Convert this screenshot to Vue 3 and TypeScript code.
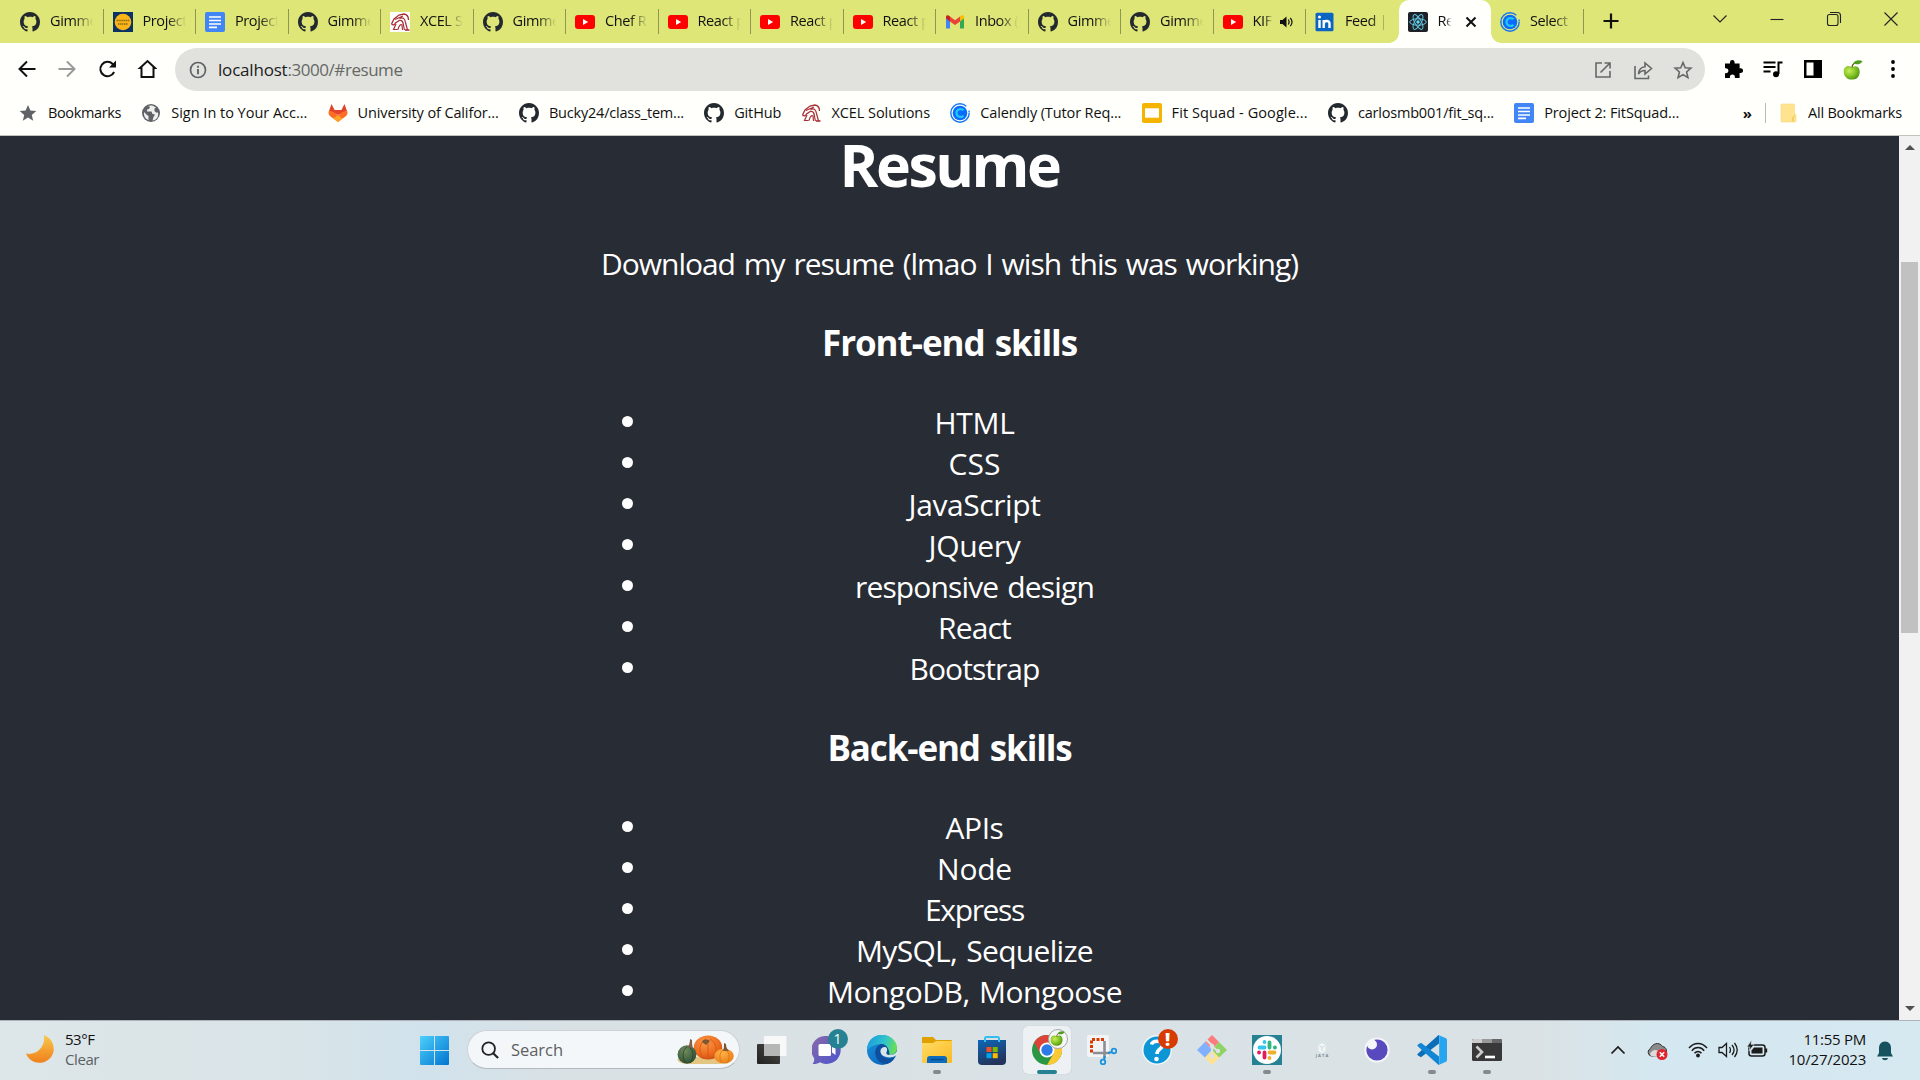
<script setup lang="ts">
interface Tab { icon: string; title: string; audio?: boolean; active?: boolean }
interface Bookmark { icon: string; label: string; width: number }
interface Skill { label: string; width: number }
interface TaskItem { icon: string; running?: boolean; active?: boolean; badge?: string; alert?: boolean }

/* Tunes letter spacing so that a label takes exactly the given width. */
const vFit = {
  mounted(el: HTMLElement, binding: { value: number }) {
    const count = (el.textContent ?? '').trim().length
    const natural = el.getBoundingClientRect().width
    if (count > 0) el.style.letterSpacing = `${((binding.value - natural) / count).toFixed(4)}px`
  },
}

const tabs: Tab[] = [
  { icon: 'github', title: 'Gimme' },
  { icon: 'climate', title: 'Project' },
  { icon: 'docs', title: 'Project' },
  { icon: 'github', title: 'Gimme' },
  { icon: 'xcelbox', title: 'XCEL S' },
  { icon: 'github', title: 'Gimme' },
  { icon: 'youtube', title: 'Chef R' },
  { icon: 'youtube', title: 'React p' },
  { icon: 'youtube', title: 'React p' },
  { icon: 'youtube', title: 'React p' },
  { icon: 'gmail', title: 'Inbox (' },
  { icon: 'github', title: 'Gimme' },
  { icon: 'github', title: 'Gimme' },
  { icon: 'youtube', title: 'KIF', audio: true },
  { icon: 'linkedin', title: 'Feed |' },
  { icon: 'react', title: 'Re', active: true },
  { icon: 'calendly', title: 'Select' },
]

const bookmarks: Bookmark[] = [
  { icon: 'star', label: 'Bookmarks', width: 73 },
  { icon: 'globe', label: 'Sign In to Your Acc...', width: 136 },
  { icon: 'gitlab', label: 'University of Califor...', width: 141 },
  { icon: 'github', label: 'Bucky24/class_tem...', width: 135 },
  { icon: 'github', label: 'GitHub', width: 47 },
  { icon: 'xcel', label: 'XCEL Solutions', width: 98.5 },
  { icon: 'calendly', label: 'Calendly (Tutor Req...', width: 141 },
  { icon: 'slides', label: 'Fit Squad - Google...', width: 136 },
  { icon: 'github', label: 'carlosmb001/fit_sq...', width: 136 },
  { icon: 'docs', label: 'Project 2: FitSquad...', width: 135 },
]

const frontEnd: Skill[] = [
  { label: 'HTML', width: 80 },
  { label: 'CSS', width: 52 },
  { label: 'JavaScript', width: 132 },
  { label: 'JQuery', width: 92 },
  { label: 'responsive design', width: 239 },
  { label: 'React', width: 73 },
  { label: 'Bootstrap', width: 130 },
]
const backEnd: Skill[] = [
  { label: 'APIs', width: 58 },
  { label: 'Node', width: 75 },
  { label: 'Express', width: 99 },
  { label: 'MySQL, Sequelize', width: 237 },
  { label: 'MongoDB, Mongoose', width: 295 },
]

const taskItems: TaskItem[] = [
  { icon: 'taskview' },
  { icon: 'chat', badge: '1' },
  { icon: 'edge' },
  { icon: 'explorer', running: true },
  { icon: 'store' },
  { icon: 'chrome', active: true },
  { icon: 'snip' },
  { icon: 'help', alert: true },
  { icon: 'git' },
  { icon: 'slack', running: true },
  { icon: 'jata' },
  { icon: 'insomnia' },
  { icon: 'vscode', running: true },
  { icon: 'terminal', running: true },
]
</script>

<template>
  <div class="screen">
    <svg class="sprite" width="0" height="0" aria-hidden="true">
      <defs>
        <linearGradient id="gWin" x1="0" y1="0" x2="1" y2="1"><stop offset="0" stop-color="#4cd0fb" /><stop offset="1" stop-color="#0274d0" /></linearGradient>
        <linearGradient id="gMoon" x1="0" y1="0" x2="0" y2="1"><stop offset="0" stop-color="#f8c84a" /><stop offset="1" stop-color="#f0801c" /></linearGradient>
        <linearGradient id="gChat" x1="0" y1="0" x2="1" y2="1"><stop offset="0" stop-color="#8b6aa8" /><stop offset="1" stop-color="#4b54cc" /></linearGradient>
        <linearGradient id="gEdgeTop" x1="0" y1="0.3" x2="1" y2="0.5"><stop offset="0" stop-color="#1b9de0" /><stop offset="0.6" stop-color="#32c6c8" /><stop offset="1" stop-color="#6be04e" /></linearGradient>
        <linearGradient id="gEdgeLow" x1="0" y1="0" x2="0.8" y2="1"><stop offset="0" stop-color="#1b94e0" /><stop offset="1" stop-color="#0b62b8" /></linearGradient>
        <linearGradient id="gFolder" x1="0" y1="0" x2="1" y2="1"><stop offset="0" stop-color="#ffdc68" /><stop offset="1" stop-color="#fbba20" /></linearGradient>
        <linearGradient id="gStore" x1="0" y1="0" x2="0.4" y2="1"><stop offset="0" stop-color="#0e68b8" /><stop offset="1" stop-color="#23345c" /></linearGradient>
        <linearGradient id="gDark" x1="0" y1="1" x2="1" y2="0"><stop offset="0" stop-color="#222" /><stop offset="1" stop-color="#4a4a48" /></linearGradient>
        <radialGradient id="gPump" cx="0.4" cy="0.3" r="0.8"><stop offset="0" stop-color="#f99a48" /><stop offset="0.6" stop-color="#ee6c1e" /><stop offset="1" stop-color="#c64a10" /></radialGradient>
        <radialGradient id="gPumpG" cx="0.4" cy="0.3" r="0.8"><stop offset="0" stop-color="#6f8c5c" /><stop offset="1" stop-color="#274830" /></radialGradient>
        <radialGradient id="gPumpS" cx="0.4" cy="0.3" r="0.8"><stop offset="0" stop-color="#ffb347" /><stop offset="1" stop-color="#e87812" /></radialGradient>
        <radialGradient id="gApple" cx="0.35" cy="0.35" r="0.75"><stop offset="0" stop-color="#c8ec5c" /><stop offset="0.5" stop-color="#86c828" /><stop offset="1" stop-color="#4c8c10" /></radialGradient>
      </defs>

      <symbol id="i-github" viewBox="0 0 16 16"><path fill="#24292f" d="M8 0C3.58 0 0 3.58 0 8c0 3.54 2.29 6.53 5.47 7.59.4.07.55-.17.55-.38 0-.19-.01-.82-.01-1.49-2.01.37-2.53-.49-2.69-.94-.09-.23-.48-.94-.82-1.13-.28-.15-.68-.52-.01-.53.63-.01 1.08.58 1.23.82.72 1.21 1.87.87 2.33.66.07-.52.28-.87.51-1.07-1.78-.2-3.64-.89-3.64-3.95 0-.87.31-1.59.82-2.15-.08-.2-.36-1.02.08-2.12 0 0 .67-.21 2.2.82.64-.18 1.32-.27 2-.27s1.36.09 2 .27c1.53-1.04 2.2-.82 2.2-.82.44 1.1.16 1.92.08 2.12.51.56.82 1.27.82 2.15 0 3.07-1.87 3.75-3.65 3.95.29.25.54.73.54 1.48 0 1.07-.01 1.93-.01 2.2 0 .21.15.46.55.38A8.01 8.01 0 0 0 16 8c0-4.42-3.58-8-8-8z" /></symbol>
      <symbol id="i-climate" viewBox="0 0 20 20"><rect width="20" height="20" fill="#0c3264" /><circle cx="10" cy="10" r="8.300" fill="#fdb515" /><path d="M3.500 8.500h13M5 12h10" stroke="#8a6a1c" stroke-width="1.500" stroke-dasharray="1.400 .5" /></symbol>
      <symbol id="i-docs" viewBox="0 0 20 20"><rect width="20" height="20" rx="2" fill="#4285f4" /><path d="M4 5h12M4 8.500h12M4 12h12M4 15.300h8" stroke="#fff" stroke-width="1.700" /></symbol>
      <symbol id="i-slides" viewBox="0 0 20 20"><rect width="20" height="20" rx="2" fill="#f4b400" /><rect x="3" y="5.300" width="14" height="9.400" fill="#fff" /></symbol>
      <symbol id="i-xcel" viewBox="0 0 20 20"><g fill="none" stroke="#a83038"><path d="M1.500 12L4 7l5-4 5-1c3 .5 4.500 3 4.500 6" stroke-width="1.300" /><path d="M1.500 12c1.500 1.500 3 1 4-1l4.500-3" stroke-width="1.300" /><path d="M5 7.500L13 4M9.500 6.500c4-2 5.500 1 6 4l2 7.500" stroke-width="1.200" /><path d="M10 8.500c4-.5 3 5 4.500 9.500M6 12l-2.500 5.500h4M8 17.500c1-4 2.500-5.500 4-4.500l.5 5" stroke-width="1.200" /><path d="M15 18h4.500" stroke-width="1.600" /></g></symbol>
      <symbol id="i-xcelbox" viewBox="0 0 20 20"><rect width="20" height="20" fill="#fff" /><use href="#i-xcel" width="20" height="20" /></symbol>
      <symbol id="i-youtube" viewBox="0 0 20 20"><rect y="3" width="20" height="14" rx="3" fill="#f00" /><path d="M8 7l5.200 3L8 13z" fill="#fff" /></symbol>
      <symbol id="i-gmail" viewBox="0 0 20 20"><path d="M1 5v11.500h4V8.500z" fill="#4285f4" /><path d="M15 8.500v8h4V5z" fill="#34a853" /><path d="M5 4.500v5L10 13l5-3.500v-5L10 8.200z" fill="#ea4335" /><path d="M1 5c0-2 2-2.500 4-.5v5L1 6.500z" fill="#c5221f" /><path d="M19 5c0-2-2-2.500-4-.5v5l4-3z" fill="#fbbc04" /></symbol>
      <symbol id="i-linkedin" viewBox="0 0 20 20"><rect x=".5" y=".8" width="18" height="18.400" rx="1.500" fill="#0a66c2" /><path d="M4.500 8v8M8.700 16V8M8.700 12c0-4 5.800-4 5.800-.5V16" fill="none" stroke="#fff" stroke-width="2.400" /><circle cx="4.500" cy="5" r="1.500" fill="#fff" /></symbol>
      <symbol id="i-react" viewBox="0 0 20 20"><rect width="20" height="20" rx="2" fill="#1e2127" /><g fill="none" stroke="#61c5e0" stroke-width="1"><ellipse cx="10" cy="10" rx="8.300" ry="3.200" /><ellipse cx="10" cy="10" rx="8.300" ry="3.200" transform="rotate(60 10 10)" /><ellipse cx="10" cy="10" rx="8.300" ry="3.200" transform="rotate(120 10 10)" /></g><circle cx="10" cy="10" r="1.700" fill="#61dafb" /></symbol>
      <symbol id="i-calendly" viewBox="0 0 20 20"><circle cx="10" cy="10" r="9.200" fill="none" stroke="#1777f2" stroke-width="1.400" stroke-dasharray="50 5 2 .8" /><circle cx="10" cy="10" r="7.300" fill="#0a6bff" /><path d="M13.500 7.300c-2-2.300-7-1.300-7 2.700s5 5 7 2.700" fill="none" stroke="#20c8f0" stroke-width="2.200" /></symbol>
      <symbol id="i-star" viewBox="0 0 20 20"><path fill="#5f6368" d="M10 2l2.400 5.500 5.900.5-4.500 3.900 1.400 5.900L10 14.600l-5.200 3.200 1.400-5.900L1.700 8l5.900-.5z" /></symbol>
      <symbol id="i-globe" viewBox="0 0 20 20"><circle cx="10" cy="10" r="9" fill="#5f6368" /><path d="M3 9l3 3 1.500 1v4c-3-1-5-4-4.500-8zM7 3l2 .8-1 2.200-2 .5v2h4.500l1 2.500 2.500.5L12.500 14l-1 3.500c4 0 6.500-4 5.500-8h-2l-1.500-1.500V5.500l1.500-1C12 2 9 2 7 3z" fill="#fffffb" opacity=".9" /></symbol>
      <symbol id="i-gitlab" viewBox="0 0 20 20"><path fill="#e24329" d="M3.500 1L1 8l9 4 9-4-2.500-7L13.400 7H6.600z" /><path fill="#fc6d26" d="M1 7.500C0 10 .5 12 2.500 13.500L10 19l7.500-5.500c2-1.500 2.500-3.500 1.500-6L14.500 9 10 12.500 5.500 9z" /><path fill="#fca326" d="M5.500 15.600L10 12.300l4.500 3.300L10 19z" /></symbol>
      <symbol id="i-folder" viewBox="0 0 20 20"><path d="M4 1h10.500a1 1 0 0 1 1 1v9l1.500.5V18a1 1 0 0 1-1 1H3a1 1 0 0 1-1-1V2a1 1 0 0 1 1-1z" fill="#ffe391" stroke="#f6d878" stroke-width=".6" /><path d="M14 18.500v-4l1.500-2" fill="none" stroke="#e8bb40" /></symbol>
      <symbol id="i-apple" viewBox="0 0 20 20"><path d="M9 7C4 4.500.5 7.500.7 12S4.500 20 9 19.500c5 .5 7.500-3.500 7.700-7.500S14 4.500 9 7z" fill="url(#gApple)" /><path d="M9 7.500c0-2 .7-3 2-4" fill="none" stroke="#5b3b16" stroke-width="1.100" /><path d="M10 3.500C12 0 16.500-.5 19.500 1.200c-1.500 3-5.500 4-9.500 2.300z" fill="#4f9c1c" /></symbol>

      <symbol id="i-windows" viewBox="0 0 29 29"><path fill="url(#gWin)" d="M1 0h13v14H0V1a1 1 0 0 1 1-1zM15 0h13a1 1 0 0 1 1 1v13H15zM0 15h14v14H1a1 1 0 0 1-1-1zM15 15h14v13a1 1 0 0 1-1 1H15z" /></symbol>
      <symbol id="i-moon" viewBox="0 0 28 28"><path fill="url(#gMoon)" d="M18 0C27 4 30 13 26 20.500 21 30 5 31 0 18.500 9 21 20 13 18 0z" /></symbol>
      <symbol id="i-taskview" viewBox="0 0 30 30"><rect y="9" width="23" height="20" rx="1" fill="url(#gDark)" /><rect x="7" y="1" width="22.500" height="20" rx="1" fill="#f8f8f8" /><rect x="7" y="9" width="16" height="12" fill="#b5b6b6" /></symbol>
      <symbol id="i-chat" viewBox="0 0 30 30"><path d="M15 1a14 14 0 1 1-7 26.300c-2 1.500-5 2-7.500 1.700 1.500-2 2-4 1.500-6A14 14 0 0 1 15 1z" fill="url(#gChat)" /><rect x="6.500" y="9" width="12.500" height="12" rx="1.500" fill="#fff" /><path d="M20 12.500l3.500-2.500v10L20 17.500z" fill="#fff" /></symbol>
      <symbol id="i-edge" viewBox="0 0 30 30"><circle cx="15" cy="15" r="15" fill="url(#gEdgeLow)" /><path d="M.3 12C2 3 9-.5 16 0c9 .5 14 7 14 13 0 5-4 7-7.500 7-3 0-4-1.500-3-3 2.500-4-.5-8-5-8C8 9 2 12 .3 16z" fill="url(#gEdgeTop)" /><path d="M14 9c-5 2-7 7-5 12.500S16 30 21 28.500c3.500-1.500 6-4 6.500-6-5 2.500-13 1-14-5.500-.3-2 .5-3.500 2-4.500 3-1 5 1.500 4 4.500-.5 1.500 0 3 3 3 0-6-3-11-8.500-11z" fill="#0d4f9e" /><path d="M15 13c-2.500 2-2 6 1.500 8 3.500 1.800 8 2 11.500 0l2-1v-4c-1.500 3-4.500 4-7.500 4-3 0-4-1.500-3-3 .8-1.500.8-3 .3-3.800C19 12 17 11.500 15 13z" fill="#dae3e7" /></symbol>
      <symbol id="i-explorer" viewBox="0 0 30 30"><path d="M0 3a1 1 0 0 1 1-1h10l3 3h15a1 1 0 0 1 1 1v4H0z" fill="#dfa000" /><path d="M0 8h11l3-2h16v21a1 1 0 0 1-1 1H1a1 1 0 0 1-1-1z" fill="url(#gFolder)" /><path d="M5 28v-4a3 3 0 0 1 3-3h14a3 3 0 0 1 3 3v4z" fill="#0f6cbd" /><path d="M8.500 24.500h13" stroke="#0a4a8c" stroke-width="1.300" /></symbol>
      <symbol id="i-store" viewBox="0 0 30 30"><path d="M8 7V3.500A1.500 1.500 0 0 1 9.500 2h11A1.500 1.500 0 0 1 22 3.500V7" fill="none" stroke="#35bdf0" stroke-width="2" /><path d="M1 5h28v21a4 4 0 0 1-4 4H5a4 4 0 0 1-4-4z" fill="url(#gStore)" /><path d="M8 5v2M22 5v2" stroke="#35bdf0" stroke-width="2" /><path d="M9.500 12h5v5h-5z" fill="#f25022" /><path d="M15.700 12h5v5h-5z" fill="#7fba00" /><path d="M9.500 18.200h5v5h-5z" fill="#00a4ef" /><path d="M15.700 18.200h5v5h-5z" fill="#ffb900" /></symbol>
      <symbol id="i-chrome" viewBox="0 0 30 30"><circle cx="15" cy="15" r="15" fill="#2a9744" /><path d="M2 7.500A15 15 0 0 1 15 0a15 15 0 0 1 13 7.500H15L8.500 18.800z" fill="#db4437" /><path d="M28 7.500A15 15 0 0 1 15 30l6.500-11.200L15 7.500z" fill="#fcc934" /><circle cx="15" cy="15" r="7.500" fill="#fff" /><circle cx="15" cy="15" r="5.700" fill="#2c7be8" /></symbol>
      <symbol id="i-snip" viewBox="0 0 30 30"><rect width="22" height="22" rx="2" fill="#f2f3f4" /><path d="M17 4.500H4.500V18" fill="none" stroke="#d83b01" stroke-width="3" stroke-dasharray="3 1.500" /><path d="M17.500 6v17M6 18h17" stroke="#8b8f94" stroke-width="2.600" /><circle cx="16" cy="27" r="2.300" fill="none" stroke="#1b93dc" stroke-width="1.800" /><circle cx="27" cy="16" r="2.300" fill="none" stroke="#1b93dc" stroke-width="1.800" /><path d="M17 25l.8-4M25 17l-4 .9" stroke="#1b93dc" stroke-width="2" /></symbol>
      <symbol id="i-help" viewBox="0 0 30 30"><circle cx="15" cy="15" r="15" fill="#f2f7fa" /><circle cx="15" cy="15" r="13.500" fill="#0c96d6" /><path d="M9.500 9.500c1-4.500 11-4.500 11 .5 0 4-5.500 4-5.500 9" fill="none" stroke="#fff" stroke-width="3.600" /><circle cx="14.500" cy="24" r="2.300" fill="#fff" /></symbol>
      <symbol id="i-git" viewBox="0 0 30 30"><path d="M15 0l7 7-7 7.500L8 7z" fill="#fb7c7c" /><path d="M8 7l7 8-7 7.500L0 15z" fill="#80b0ff" /><path d="M22 7l8 8-8 7.500-7-7.500z" fill="#8ed364" /><path d="M8 22.500l7-7.500 7 7.500-7 7.500z" fill="#ffe28a" /><path d="M9.500 5l5.500 5.500V22M15 11l6 5.500" fill="none" stroke="#dbe3e6" stroke-width="2.200" /><circle cx="15" cy="11" r="2.200" fill="#dbe3e6" /><circle cx="21" cy="16" r="2.200" fill="#dbe3e6" /><circle cx="15" cy="21.500" r="2.400" fill="#dbe3e6" /></symbol>
      <symbol id="i-slack" viewBox="0 0 30 30"><rect width="30" height="30" fill="#268292" /><circle cx="15" cy="15" r="14" fill="#fff" /><g fill="none" stroke-width="3.800" stroke-linecap="round"><path d="M12.500 7v.1M7.500 12.500h5" stroke="#36c5f0" /><path d="M17.500 7.500v5M23 12.500h-.1" stroke="#2eb67d" /><path d="M22.500 17.500h-5M17.500 23v-.1" stroke="#ecb22e" /><path d="M12.500 22.500v-5M7 17.500h.1" stroke="#e01e5a" /></g></symbol>
      <symbol id="i-jata" viewBox="0 0 30 30"><path d="M15 8l3.500 2v6L15 18l-3.500-2v-6z" fill="#f2f5f6" /><path d="M12.500 11l2.500 1.500 2.500-1.500M15 13v3" stroke="#cfd6da" fill="none" /><text x="8.700" y="22" font-size="4.200" font-weight="700" textLength="12.600" fill="#7d8896">JATA</text></symbol>
      <symbol id="i-insomnia" viewBox="0 0 30 30"><circle cx="15" cy="15" r="12.600" fill="#f4f5f9" /><circle cx="15" cy="15" r="10.600" fill="#5849be" /><circle cx="10" cy="9.500" r="5" fill="#f4f5f9" /></symbol>
      <symbol id="i-vscode" viewBox="0 0 30 30"><path d="M22 8.500L4 22.300 1 20.500c-.8-.5-.8-1.400 0-2L21 .5l1-.5z" fill="#0a6fb8" /><path d="M22 21.500L4 7.700 1 9.500c-.8.5-.8 1.400 0 2L21 29.500l1 .5z" fill="#1286d4" /><path d="M21.500 0L29 3.300a2 2 0 0 1 1 1.700v20a2 2 0 0 1-1 1.700L21.500 30c.5-.3.700-.8.700-1.500v-27c0-.7-.2-1.200-.7-1.500z" fill="#27a5ef" /></symbol>
      <symbol id="i-terminal" viewBox="0 0 30 30"><rect y="4" width="30" height="22" rx="1.500" fill="#383838" /><path d="M1.500 4H10v4H0V5.500A1.500 1.500 0 0 1 1.500 4z" fill="#ccc" /><path d="M10 4h10v4H10z" fill="#999" /><path d="M20 4h8.500A1.500 1.500 0 0 1 30 5.500V8H20z" fill="#666" /><path d="M4.500 11.500l5.500 5.500-5.500 5.500" fill="none" stroke="#ccc" stroke-width="2.600" /><path d="M13 22h10" stroke="#fff" stroke-width="2.600" /></symbol>
    </svg>

    <header class="tabstrip">
      <div class="tabs">
        <div v-for="(tab, i) in tabs" :key="i" class="tab" :class="{ active: tab.active, plain: i === 14 }">
          <svg class="fav"><use :href="'#i-' + tab.icon" /></svg>
          <span class="tab-title" :class="{ short: tab.audio || tab.active }">{{ tab.title }}</span>
          <svg v-if="tab.audio" class="audio" viewBox="0 0 14 14"><path d="M1 5h2.500L7.500 1.500v11L3.500 9H1z" fill="#111" /><path d="M9.300 4.500c1 1.500 1 3.500 0 5M11.300 2.800c2 2.500 2 6 0 8.400" fill="none" stroke="#111" stroke-width="1.200" /></svg>
          <svg v-if="tab.active" class="tab-close" viewBox="0 0 12 12"><path d="M1.500 1.500l9 9M10.500 1.500l-9 9" stroke="#111" stroke-width="2" /></svg>
        </div>
      </div>
      <svg class="new-tab" viewBox="0 0 16 16"><path d="M8 .5v15M.5 8h15" stroke="#111" stroke-width="2.200" /></svg>
      <div class="window-controls">
        <svg viewBox="0 0 16 16"><path d="M1.500 4.500L8 11l6.500-6.500" /></svg>
        <svg viewBox="0 0 16 16"><path d="M1.500 8.500h13" /></svg>
        <svg viewBox="0 0 16 16"><rect x="1.500" y="3.500" width="10.500" height="11" rx="2" /><path d="M4 1.500h7.500a3 3 0 0 1 3 3V12" /></svg>
        <svg viewBox="0 0 16 16"><path d="M1.500 1.500l13 13M14.500 1.500l-13 13" /></svg>
      </div>
    </header>

    <div class="toolbar">
      <div class="nav">
        <svg viewBox="0 0 20 20"><path d="M18.500 10H3M10 2.500L2.500 10l7.500 7.500" /></svg>
        <svg class="dim" viewBox="0 0 20 20"><path d="M1.500 10H17M10 2.500l7.500 7.500-7.500 7.500" /></svg>
        <svg viewBox="0 0 20 20"><path d="M17.100 13A7.200 7.200 0 1 1 15.700 5l1.500 1.500" /><path d="M19 1.500v7h-7z" class="solid" /></svg>
        <svg viewBox="0 0 20 20"><path d="M4.500 18V9H3l7.500-7L18 9h-1.500v9z" /></svg>
      </div>
      <div class="omnibox">
        <svg class="info" viewBox="0 0 18 18"><circle cx="9" cy="9" r="7.500" fill="none" stroke="#5f6368" stroke-width="1.700" /><path d="M9 8v5.200M9 4.800v1.900" stroke="#5f6368" stroke-width="1.900" /></svg>
        <div class="url"><span v-fit="69.5" class="host">localhost</span><span v-fit="115">:3000/#resume</span></div>
        <div class="omni-actions">
          <svg viewBox="0 0 20 20"><path d="M9 3H3v14h14v-6M11.500 3H17v5.500M17 3L7.500 12.500" /></svg>
          <svg viewBox="0 0 20 20"><path d="M2 6v12.500h13.500v-3M5.500 14c.5-5 3-7 6.500-7.200V3l6.500 5.500L12 14v-3.500c-3 0-5 1-6.500 3.500z" /></svg>
          <svg viewBox="0 0 20 20"><path d="M10 2.500l2.200 5.200 5.700.5-4.300 3.800 1.300 5.600L10 14.600l-4.900 3 1.300-5.600L2.100 8.200l5.700-.5z" /></svg>
        </div>
      </div>
      <div class="ext">
        <svg viewBox="0 0 20 20"><path fill="#000" d="M2 4.500h5V3.300a2.300 2.300 0 0 1 4.600 0v1.200h5v4.700h1.100a2.300 2.300 0 0 1 0 4.700h-1.100v5.100h-4.700v-1a2.500 2.500 0 0 0-5 0v1H2v-4.800h1a2.500 2.500 0 0 0 0-5H2z" /></svg>
        <svg viewBox="0 0 20 20"><path d="M.5 3.500h12M.5 8h12M.5 12.500h7" stroke="#000" stroke-width="1.900" /><path d="M15.500 15V3.500h4" fill="none" stroke="#000" stroke-width="2" /><circle cx="13" cy="15.200" r="3" fill="#000" /></svg>
        <svg viewBox="0 0 20 20"><path fill="#000" fill-rule="evenodd" d="M1 1h18v18H1zM3.500 3.500v13h7v-13z" /></svg>
        <svg class="avatar"><use href="#i-apple" /></svg>
        <svg viewBox="0 0 20 20"><circle cx="10" cy="3" r="1.900" /><circle cx="10" cy="10" r="1.900" /><circle cx="10" cy="17" r="1.900" /></svg>
      </div>
    </div>

    <div class="bookmarks">
      <div v-for="(b, i) in bookmarks" :key="i" class="bookmark">
        <svg class="fav"><use :href="'#i-' + b.icon" /></svg>
        <span v-fit="b.width">{{ b.label }}</span>
      </div>
      <div class="bookmark-end">
        <span class="more">»</span>
        <i class="rule"></i>
        <svg class="fav"><use href="#i-folder" /></svg>
        <span v-fit="94">All Bookmarks</span>
      </div>
    </div>

    <div class="viewport">
      <main class="page">
        <section class="resume">
          <h1><span v-fit="220">Resume</span></h1>
          <p><span v-fit="697">Download my resume (lmao I wish this was working)</span></p>
          <h3><span v-fit="255">Front-end skills</span></h3>
          <ul>
            <li v-for="s in frontEnd" :key="s.label"><span v-fit="s.width">{{ s.label }}</span></li>
          </ul>
          <h3><span v-fit="244">Back-end skills</span></h3>
          <ul>
            <li v-for="s in backEnd" :key="s.label"><span v-fit="s.width">{{ s.label }}</span></li>
          </ul>
        </section>
      </main>
      <div class="scrollbar">
        <i class="arrow up"></i>
        <i class="thumb"></i>
        <i class="arrow down"></i>
      </div>
    </div>

    <footer class="taskbar">
      <div class="weather">
        <svg class="moon"><use href="#i-moon" /></svg>
        <div class="weather-text">
          <span v-fit="29.5">53°F</span>
          <span v-fit="34" class="muted">Clear</span>
        </div>
      </div>
      <div class="center">
        <svg class="start"><use href="#i-windows" /></svg>
        <div class="search">
          <svg class="lens" viewBox="0 0 20 20"><circle cx="8.500" cy="8.500" r="7" fill="none" stroke="#222" stroke-width="2" /><path d="M13.500 13.500l5.500 5.500" stroke="#222" stroke-width="2.400" /></svg>
          <span v-fit="52">Search</span>
          <svg class="pumpkins" viewBox="0 0 57 30">
            <path d="M0 24.500c12-3 45-5 55-1-1 4-4 5.500-8 5.500H12C6 29 2 28 0 24.500z" fill="#e3c684" />
            <ellipse cx="31" cy="12.500" rx="14.200" ry="12" fill="url(#gPump)" />
            <path d="M29 4c-7 4-8 12-3 19M33 4c7 4 8 12 3 19M31 5v19" fill="none" stroke="#cf5214" stroke-width=".8" />
            <path d="M25 7c1-3 5-3 8-1l-4 4z" fill="#7b5735" />
            <ellipse cx="10" cy="19.500" rx="9.400" ry="9.300" fill="url(#gPumpG)" />
            <path d="M10 12c-5 3-5 12-1 16M12 12c5 3 5 12 1 16" fill="none" stroke="#23432c" stroke-width=".8" />
            <path d="M10 12c2-1 3-4 3-8l2 1c0 3 0 5 1 8z" fill="#806248" />
            <ellipse cx="47" cy="21" rx="9.800" ry="7.300" fill="url(#gPumpS)" />
            <path d="M46 15c-4 3-4 9-1 13M49 15c4 3 4 9 1 13" fill="none" stroke="#d96f10" stroke-width=".8" />
            <path d="M46 16c1-2 1-5 1-8l2 1c0 3 1 5 3 7z" fill="#7b5735" />
          </svg>
        </div>
        <div v-for="item in taskItems" :key="item.icon" class="task" :class="{ active: item.active }">
          <svg class="task-icon"><use :href="'#i-' + item.icon" /></svg>
          <span v-if="item.badge" class="badge">{{ item.badge }}</span>
          <span v-if="item.alert" class="badge alert">!</span>
          <span v-if="item.active" class="profile"><svg><use href="#i-apple" /></svg></span>
          <i v-if="item.running || item.active" class="indicator" :class="{ wide: item.active }"></i>
        </div>
      </div>
      <div class="tray">
        <svg class="chev" viewBox="0 0 16 10"><path d="M1.500 8.500L8 2l6.500 6.500" fill="none" stroke="#1b1b1b" stroke-width="1.700" /></svg>
        <svg class="cloud" viewBox="0 0 21 18"><path d="M4 14a4 4 0 0 1-.5-7.500C5 2 12-1 15.500 4.500 20 5 20 10 19 13z" fill="#8b8b8b" stroke="#333" stroke-width="1" /><path d="M3 12c2-5 7-5 9-2l-2 4H4z" fill="#dcdcdc" /><circle cx="15" cy="12.500" r="5.500" fill="#e0252e" /><path d="M12.800 10.300l4.400 4.400M17.200 10.300l-4.400 4.400" stroke="#fff" stroke-width="1.500" /></svg>
        <svg class="wifi" viewBox="0 0 20 16"><g fill="none" stroke="#1b1b1b" stroke-width="1.400"><path d="M1 6c5-6 13-6 18 0" /><path d="M3.800 8.700c3.500-4.200 9-4.200 12.400 0" /><path d="M6.500 11.300c2-2.500 5-2.500 7 0" /></g><circle cx="10" cy="13.500" r="1.900" fill="#1b1b1b" /></svg>
        <svg class="vol" viewBox="0 0 20 16"><g fill="none" stroke="#1b1b1b" stroke-width="1.300"><path d="M1 5.500h3L8.500 1.500v13L4 10.500H1z" /><path d="M11.500 5c1.300 2 1.300 4 0 6M14 3c2.500 3 2.500 7 0 10M16.500 1c3.500 4.500 3.500 9.500 0 14" /></g></svg>
        <svg class="batt" viewBox="0 0 21 18"><rect x="2" y="5" width="16" height="11" rx="2.500" fill="none" stroke="#1b1b1b" stroke-width="1.500" /><path d="M7 7.500h8.500v6H4.500v-3z" fill="#1b1b1b" /><path d="M19.200 8.500v4" stroke="#1b1b1b" stroke-width="2" /><path d="M4.500 0L0 7h3l-1 4 5-6.500H4z" fill="#1b1b1b" stroke="#d9e8f0" stroke-width=".6" /></svg>
        <div class="clock">
          <span v-fit="62.5">11:55 PM</span>
          <span v-fit="77.5">10/27/2023</span>
        </div>
        <svg class="bell" viewBox="0 0 16 20"><path d="M8 .5c4 0 6 3 6 6.500V12l2 3.500H0L2 12V7C2 3.500 4 .5 8 .5z" fill="#16535f" /><path d="M5 17h6c-.5 3-5.500 3-6 0z" fill="#16535f" /></svg>
      </div>
    </footer>
  </div>
</template>

<style>
body {
  margin: 0;
  overflow: hidden;
}
</style>

<style scoped>
.screen {
  width: 1920px;
  height: 1080px;
  display: flex;
  flex-direction: column;
  overflow: hidden;
  font-family: 'Open Sans', 'Noto Sans', sans-serif;
  font-size: 14.5px;
  color: #111;
}
.screen span {
  white-space: nowrap;
}
.sprite {
  position: absolute;
}
svg {
  display: block;
  flex: none;
}
.fav {
  width: 20px;
  height: 20px;
}

.tabstrip {
  height: 43px;
  display: flex;
  background: #dde677;
}
.tabs {
  display: flex;
  padding-left: 11px;
}
.tab {
  position: relative;
  width: 92.5px;
  height: 43px;
  box-sizing: border-box;
  padding-left: 9px;
  display: flex;
  align-items: center;
}
.tab::after {
  content: '';
  position: absolute;
  right: 0;
  top: 9px;
  width: 1px;
  height: 25px;
  background: #8f9552;
}
.tab.active::after,
.tab.plain::after {
  display: none;
}
.tab-title {
  width: 44px;
  margin: -2px 0 0 10px;
  overflow: hidden;
  line-height: 24px;
  letter-spacing: -0.4px;
  mask-image: linear-gradient(90deg, #000 56%, transparent 98%);
}
.tab-title.short {
  width: 20px;
}
.audio {
  width: 14px;
  height: 14px;
  margin-left: 6px;
}
.tab.active {
  background: #fffffb;
  border-radius: 10px 10px 0 0;
}
.tab.active::before {
  content: '';
  position: absolute;
  left: -10px;
  right: -10px;
  bottom: 0;
  height: 10px;
  background:
    radial-gradient(circle at 0 0, transparent 9.5px, #fffffb 10px) left / 10px 10px no-repeat,
    radial-gradient(circle at 100% 0, transparent 9.5px, #fffffb 10px) right / 10px 10px no-repeat;
}
.tab.active .tab-title {
  width: 14px;
}
.tab-close {
  width: 12px;
  height: 12px;
  margin-left: 13px;
}
.new-tab {
  width: 16px;
  height: 16px;
  margin: 13px 0 0 19.5px;
}
.window-controls {
  margin-left: auto;
  margin-right: 21px;
  padding-top: 11px;
  display: flex;
  gap: 41px;
}
.window-controls svg {
  width: 16px;
  height: 16px;
  fill: none;
  stroke: #222;
  stroke-width: 1.1;
}

.toolbar {
  height: 52px;
  display: flex;
  background: #fffffb;
}
.nav {
  display: flex;
  gap: 20px;
  padding: 16px 0 0 17px;
}
.nav svg {
  width: 20px;
  height: 20px;
  fill: none;
  stroke: #111;
  stroke-width: 2;
}
.nav .dim {
  stroke: #999a97;
}
.nav .solid {
  fill: #111;
  stroke: none;
}
.omnibox {
  width: 1530px;
  height: 43px;
  margin: 5px 0 0 18px;
  border-radius: 22px;
  background: #e1e2de;
  display: flex;
  align-items: center;
  box-sizing: border-box;
  padding: 0 12.5px 0 13.5px;
}
.info {
  width: 18px;
  height: 18px;
}
.url {
  display: flex;
  margin-left: 11.5px;
  font-size: 17px;
  color: #666865;
}
.host {
  color: #1c1c1c;
}
.omni-actions {
  margin-left: auto;
  display: flex;
  gap: 20px;
}
.omni-actions svg {
  width: 20px;
  height: 20px;
  fill: none;
  stroke: #666865;
  stroke-width: 1.6;
}
.ext {
  display: flex;
  gap: 20px;
  padding: 16px 0 0 17.5px;
}
.ext svg {
  width: 20px;
  height: 20px;
}
.ext .avatar {
  margin-top: 1px;
}

.bookmarks {
  height: 41px;
  border-bottom: 1px solid #c0c3b8;
  background: #fffffb;
  display: flex;
  align-items: center;
  padding: 0 18px 5px;
  gap: 20.3px;
  box-sizing: border-box;
}
.bookmark {
  display: flex;
  align-items: center;
  gap: 10px;
}
.bookmark-end {
  margin-left: auto;
  display: flex;
  align-items: center;
}
.more {
  font-size: 15px;
  font-weight: 700;
  line-height: 20px;
}
.rule {
  width: 1px;
  height: 20px;
  margin: 0 13px;
  background: #b8bab4;
}
.bookmark-end .fav {
  margin-right: 9px;
}

.viewport {
  flex: 1;
  min-height: 0;
  display: flex;
}
.page {
  flex: 1;
  overflow: hidden;
  background: #282c34;
  display: flex;
  justify-content: center;
}
.resume {
  width: 697px;
  margin-top: -12px;
  color: #fff;
  font-size: 30px;
  line-height: 41px;
  text-align: center;
  word-spacing: 0.07em;
}
.resume h1 {
  margin: 0;
  font-size: 59px;
  line-height: 80px;
}
.resume p {
  margin: 38.5px 0 35.5px;
}
.resume h3 {
  margin: 35.5px 0;
  font-size: 35px;
  line-height: 47px;
}
.resume ul {
  margin: 0;
  padding-left: 50px;
  list-style: none;
}
.resume li {
  position: relative;
}
.resume li::before {
  content: '';
  position: absolute;
  left: -29px;
  top: 14.5px;
  width: 11px;
  height: 11px;
  border-radius: 50%;
  background: #fff;
}
.scrollbar {
  width: 21px;
  background: #f1f1f1;
  display: flex;
  flex-direction: column;
  align-items: center;
}
.arrow {
  border: 5px solid transparent;
}
.arrow.up {
  border-top: 0;
  border-bottom-color: #505050;
  margin-top: 9px;
}
.arrow.down {
  border-bottom: 0;
  border-top-color: #505050;
  margin: auto 0 9px;
}
.thumb {
  width: 17px;
  height: 371px;
  margin-top: 112px;
  background: #c1c1c1;
}

.taskbar {
  height: 60px;
  flex: none;
  box-sizing: border-box;
  display: flex;
  border-top: 1px solid #adb3b9;
  background: linear-gradient(90deg, #dde6e8 0, #d9e4e8 15%, #d1e2ec 22%, #d9e1e4 30%, #d9e2e6 60%, #dae2e5 80%, #d4e8f1 87%, #d6e8f0 100%);
}
.weather {
  width: 420px;
  box-sizing: border-box;
  display: flex;
  padding: 5px 0 0 26px;
  gap: 11px;
  line-height: 20px;
}
.moon {
  width: 28px;
  height: 28px;
  margin-top: 9px;
}
.weather-text,
.clock {
  display: flex;
  flex-direction: column;
  align-items: flex-start;
  font-size: 15px;
}
.weather-text {
  margin-top: 3px;
}
.muted {
  color: #5a5f63;
}
.center {
  display: flex;
  align-items: flex-start;
}
.start {
  width: 29px;
  height: 29px;
  margin-top: 15px;
}
.search {
  width: 273px;
  height: 39px;
  margin: 9px 4px 0 18px;
  padding: 0 5px 0 13px;
  box-sizing: border-box;
  display: flex;
  align-items: center;
  border-radius: 20px;
  background: #f4f7f9;
  border: 1px solid #ccd2d6;
  border-bottom-color: #b3b9be;
  font-size: 16.5px;
  color: #5c5f61;
}
.lens {
  width: 18px;
  height: 18px;
  margin-right: 12px;
}
.pumpkins {
  width: 57px;
  height: 30px;
  margin-left: auto;
}
.task {
  position: relative;
  width: 48px;
  height: 48px;
  margin: 5px 3.5px 0;
  border-radius: 5px;
}
.task.active {
  background: #edf1f3;
  box-shadow: 0 0 1px #aab2b6;
}
.task-icon {
  width: 30px;
  height: 30px;
  margin: 9px;
}
.badge {
  position: absolute;
  left: 25px;
  top: 3px;
  width: 20px;
  height: 20px;
  border-radius: 50%;
  background: #268292;
  color: #fff;
  font-size: 14px;
  line-height: 20px;
  text-align: center;
}
.badge.alert {
  background: #d83b01;
  font-size: 18px;
  font-weight: 800;
}
.profile {
  position: absolute;
  left: 25px;
  top: 3px;
  width: 16px;
  height: 16px;
  padding: 1px;
  border: 1px solid #a4a8a8;
  border-radius: 50%;
  background: #f5f7f5;
}
.profile svg {
  width: 15px;
  height: 15px;
}
.indicator {
  position: absolute;
  left: 20px;
  bottom: 0;
  width: 8px;
  height: 4px;
  border-radius: 2px;
  background: #858b8d;
}
.indicator.wide {
  left: 14px;
  width: 20px;
  background: #268292;
}
.tray {
  display: flex;
  width: 310px;
  margin-left: auto;
  align-items: flex-start;
}
.chev {
  width: 16px;
  height: 10px;
  margin-top: 24px;
}
.cloud {
  width: 21px;
  height: 18px;
  margin: 21px 0 0 21px;
}
.wifi {
  width: 20px;
  height: 16px;
  margin: 21px 0 0 20px;
}
.vol {
  width: 20px;
  height: 16px;
  margin: 21px 0 0 10px;
}
.batt {
  width: 21px;
  height: 18px;
  margin: 19px 0 0 9px;
}
.clock {
  width: 98px;
  margin-top: 8px;
  align-items: flex-end;
  line-height: 20px;
}
.bell {
  width: 16px;
  height: 20px;
  margin: 20px 0 0 11px;
}
</style>
